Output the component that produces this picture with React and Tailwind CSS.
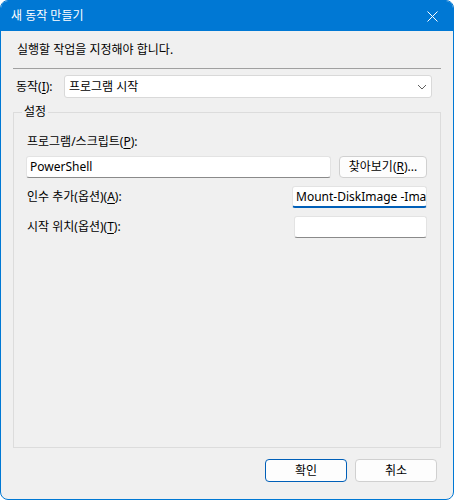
import React from "react";

const font = { fontFamily: '"Noto Sans", "Noto Sans CJK KR", sans-serif' };

function Key({ children }) {
    return <span className="underline underline-offset-2">{children}</span>;
}

function TextBox({ className = "", value = "", active = false }) {
    return (
        <div
            className={`h-[22px] bg-white rounded-[3px] border border-[#e3e3e3] flex items-center pl-[3px] overflow-hidden whitespace-nowrap ${active ? "border-b-2 border-b-[#005fb8]" : "border-b-[#8a8a8a]"} ${className}`}
        >
            {value}
        </div>
    );
}

function Button({ children, primary = false }) {
    return (
        <button
            className={`w-[82px] h-[23px] rounded-[4px] bg-[#fdfdfd] border text-[12px] text-black flex items-center justify-center ${primary ? "border-[#005fb8]" : "border-[#d0d0d0]"}`}
        >
            {children}
        </button>
    );
}

export default function App() {
    return (
        <div style={font} className="w-[454px] h-[500px] bg-[#f0f0f0] border border-[#0078d4] rounded-[8px] overflow-hidden flex flex-col text-[12px] text-black leading-[16px]">
            {/* title bar */}
            <div className="h-[30px] bg-[#0078d4] flex items-center justify-between pl-[10px] pr-[10px] text-white shrink-0">
                <span>새 동작 만들기</span>
                <svg width="11" height="11" viewBox="0 0 11 11" className="mr-[5px]">
                    <path d="M0.5 0.5L10.5 10.5M10.5 0.5L0.5 10.5" stroke="white" strokeWidth="1" />
                </svg>
            </div>

            <div className="px-[12px] flex flex-col">
                <div className="mt-[11px] ml-[4px]">실행할 작업을 지정해야 합니다.</div>
                <div className="mt-[10px] h-px bg-[#a0a0a0]"></div>

                <div className="mt-[6px] flex items-center">
                    <span className="ml-[3px] w-[48px]">동작(<Key>I</Key>):</span>
                    <div className="w-[368px] h-[23px] bg-white border border-[#d9d9d9] rounded-[3px] flex items-center justify-between pl-[4px] pr-[4px]">
                        <span>프로그램 시작</span>
                        <svg width="10" height="6" viewBox="0 0 10 6">
                            <path d="M1 1L5 5L9 1" stroke="#606060" strokeWidth="1" fill="none" />
                        </svg>
                    </div>
                </div>

                {/* 설정 group */}
                <div className="mt-[14px] h-[336px] border border-[#dcdcdc] flex flex-col pl-[12px] pr-[13px]">
                    <span className="-mt-[9px] -ml-[4px] px-[2px] w-fit bg-[#f0f0f0]">설정</span>
                    <span className="mt-[14px] ml-[1px]">프로그램/스크립트(<Key>P</Key>):</span>
                    <div className="mt-[6px] flex items-center gap-[8px]">
                        <TextBox className="w-[305px]" value="PowerShell" />
                        <button className="w-[88px] h-[22px] rounded-[4px] bg-[#fdfdfd] border border-[#d0d0d0] flex items-center justify-center">
                            찾아보기(<Key>R</Key>)...
                        </button>
                    </div>
                    <div className="mt-[8px] flex items-center justify-between">
                        <span className="ml-[1px]">인수 추가(옵션)(<Key>A</Key>):</span>
                        <TextBox className="w-[135px]" value="Mount-DiskImage -ImagePath" active />
                    </div>
                    <div className="mt-[8px] flex items-center justify-between">
                        <span className="ml-[1px]">시작 위치(옵션)(<Key>T</Key>):</span>
                        <TextBox className="w-[133px]" />
                    </div>
                </div>

                <div className="mt-[11px] flex justify-end gap-[8px] pr-[4px]">
                    <Button primary>확인</Button>
                    <Button>취소</Button>
                </div>
            </div>
        </div>
    );
}
